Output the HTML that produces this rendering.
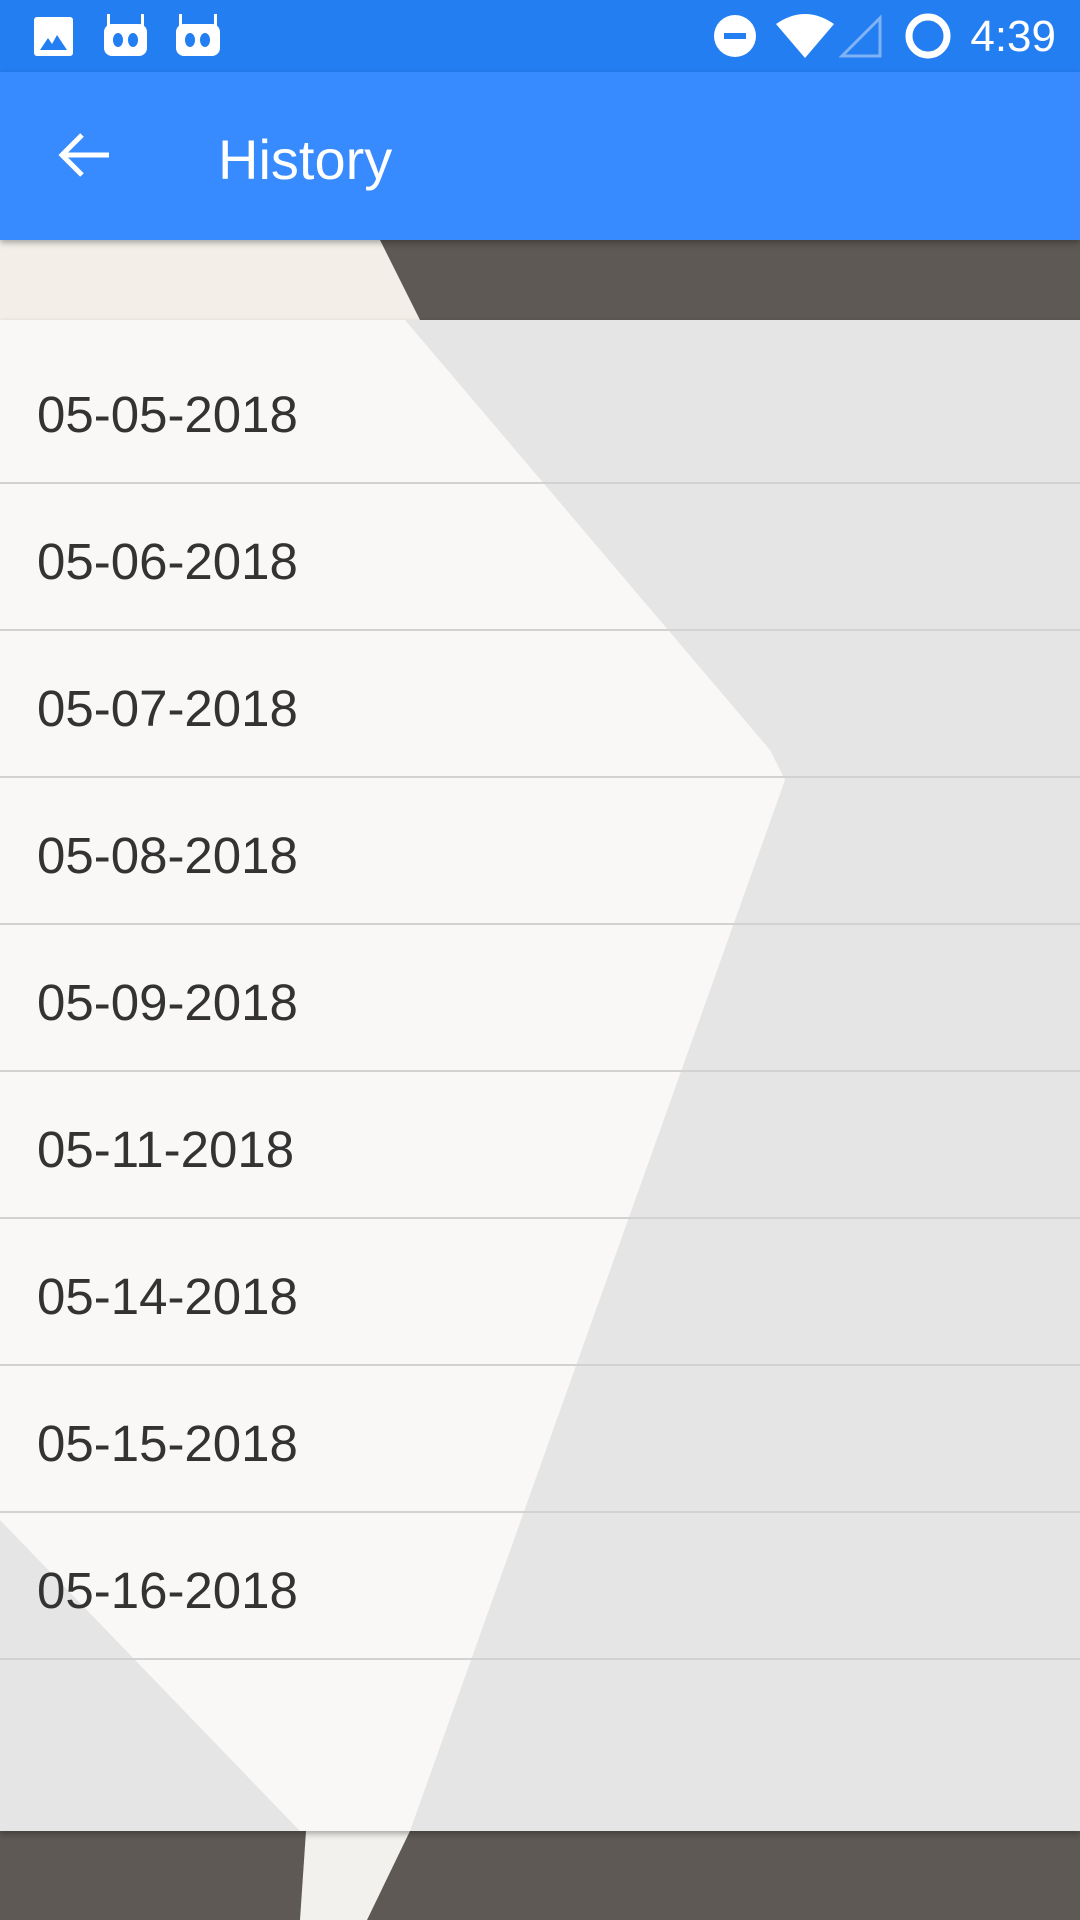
<!DOCTYPE html>
<html><head><meta charset="utf-8"><style>
*{margin:0;padding:0;box-sizing:border-box}
body{width:1080px;height:1920px;overflow:hidden;position:relative;background:#5e5954;font-family:"Liberation Sans",sans-serif}
.sb{position:absolute;left:0;top:0;width:1080px;height:72px;background:#237ef2}
.ab{position:absolute;left:0;top:72px;width:1080px;height:168px;background:#378bfe;box-shadow:0 3px 6px rgba(0,0,0,.3);z-index:3}
.ab .t{position:absolute;left:218px;top:55px;font-size:56px;color:#fff}
.time{position:absolute;right:24px;top:12px;font-size:44px;color:#fff}
.card{position:absolute;left:0;top:320px;width:1080px;height:1511px;background:#e5e5e5;box-shadow:0 3px 6px rgba(0,0,0,.3);overflow:hidden}
.row{position:absolute;left:0;width:1080px;height:147px;border-bottom:2px solid #d2d2d2}
.row span{position:absolute;left:37px;top:48px;font-size:51px;color:#333}
</style></head><body>
<div class="sb">
<svg width="1080" height="72" style="position:absolute;left:0;top:0">
<rect x="34" y="17" width="39" height="39" rx="3" fill="#fff"/>
<polygon points="40,50 48,38 52,44 57,35 67,50" fill="#237ef2"/>
<g fill="#fff"><rect x="104" y="24" width="43" height="32" rx="8"/><rect x="176" y="24" width="44" height="32" rx="8"/>
<rect x="107" y="14" width="3" height="12"/><rect x="141" y="14" width="3" height="12"/><rect x="179" y="14" width="3" height="12"/><rect x="214" y="14" width="3" height="12"/></g>
<g fill="#237ef2"><ellipse cx="118" cy="40" rx="5" ry="7"/><ellipse cx="133" cy="40" rx="5" ry="7"/><ellipse cx="190" cy="40" rx="5" ry="7"/><ellipse cx="205" cy="40" rx="5" ry="7"/></g>
<circle cx="735" cy="36" r="21" fill="#fff"/><rect x="724" y="33" width="22" height="6" fill="#237ef2"/>
<path d="M776 24 Q805 4 834 24 L805 58 Z" fill="#fff"/>
<path d="M842 56 L880 56 L880 18 Z" fill="none" stroke="#7fb2f6" stroke-width="3"/>
<circle cx="928" cy="36" r="19" fill="none" stroke="#fff" stroke-width="7"/>
</svg>
<div class="time">4:39</div>
</div>
<div class="ab">
<svg width="60" height="60" style="position:absolute;left:56px;top:53px"><path d="M6 30 L53 30 M26 10 L6 30 L26 50" stroke="#fff" stroke-width="5" fill="none"/></svg>
<div class="t">History</div>
</div>
<svg width="1080" height="1920" style="position:absolute;left:0;top:0">
<polygon points="0,240 380,240 420,320 0,320" fill="#f3efe8"/>
<polygon points="306,1831 410,1831 367,1920 300,1920" fill="#f3f1ed"/>
</svg>
<div class="card">
<svg width="1080" height="1511" style="position:absolute;left:0;top:0">
<polygon points="0,0 405,0 770,430 785,460 410,1511 300,1511 0,1200" fill="#f9f8f6"/>
</svg>
<div class="row" style="top:17px"><span>05-05-2018</span></div>
<div class="row" style="top:164px"><span>05-06-2018</span></div>
<div class="row" style="top:311px"><span>05-07-2018</span></div>
<div class="row" style="top:458px"><span>05-08-2018</span></div>
<div class="row" style="top:605px"><span>05-09-2018</span></div>
<div class="row" style="top:752px"><span>05-11-2018</span></div>
<div class="row" style="top:899px"><span>05-14-2018</span></div>
<div class="row" style="top:1046px"><span>05-15-2018</span></div>
<div class="row" style="top:1193px"><span>05-16-2018</span></div>
</div>
</body></html>
